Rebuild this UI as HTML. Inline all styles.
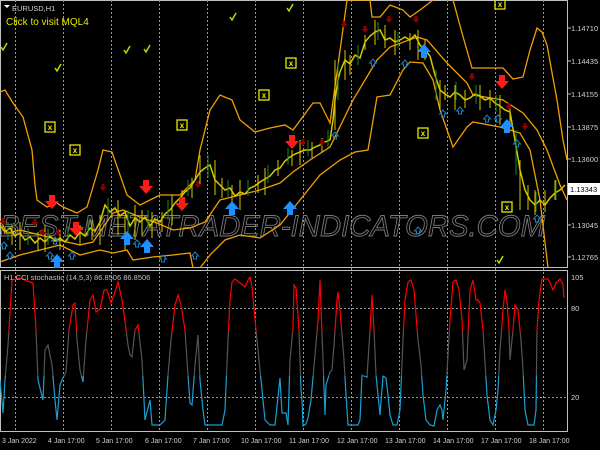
<!DOCTYPE html>
<html><head><meta charset="utf-8"><style>
html,body{margin:0;padding:0;background:#000;width:600px;height:450px;overflow:hidden}
svg{display:block}
text{font-family:"Liberation Sans",sans-serif}
</style></head><body>
<svg width="600" height="450" viewBox="0 0 600 450" xmlns="http://www.w3.org/2000/svg">
<defs>
<clipPath id="cTop"><rect x="0" y="270" width="568" height="62"/></clipPath>
<clipPath id="cMid"><rect x="0" y="332" width="568" height="44"/></clipPath>
<clipPath id="cBot"><rect x="0" y="376" width="568" height="60"/></clipPath>
<clipPath id="cMain"><rect x="0" y="0" width="568" height="268"/></clipPath>
<g id="rdn"><path d="M-3,-8 h6 v6 h4 l-7,8 l-7,-8 h4z" fill="#ff1a1a"/></g>
<g id="bup"><path d="M-3,8 h6 v-6 h4 l-7,-8 l-7,8 h4z" fill="#1e90ff"/></g>
<g id="sup"><path d="M-1.5,4 h3 v-3 h2 l-3.5,-4 l-3.5,4 h2z" fill="none" stroke="#1e7fc0" stroke-width="1"/></g>
<g id="sdn"><path d="M-1.5,-4 h3 v3 h2 l-3.5,4 l-3.5,-4 h2z" fill="#8b0000"/></g>
<g id="xb"><rect x="-5" y="-5" width="10" height="10" fill="none" stroke="#e6e600" stroke-width="1.3"/><text x="0" y="3" font-size="8" fill="#e6e600" text-anchor="middle" font-weight="bold">x</text></g>
<g id="ck"><path d="M-3,0 l2,3 l4,-7" fill="none" stroke="#c8d400" stroke-width="1.5"/></g>
<polyline id="sp" fill="none" stroke-width="1.2" points="0,380 3,413 5,380 8,345 12,280 20,278 25,280 30,282 33,283 36,330 38,380 43,400 45,350 48,345 52,365 55,400 57,420 60,385 62,380 66,372 69,330 73,305 75,303 77,340 80,370 83,382 86,340 88,320 90,300 93,295 96,312 100,309 104,290 107,290 111,303 114,295 118,282 122,300 125,321 128,345 130,355 132,357 135,330 138,325 142,360 145,420 150,400 152,425 160,425 165,420 168,375 171,340 175,305 178,295 181,305 185,330 188,375 190,403 192,405 195,365 198,335 200,380 203,410 205,425 222,425 225,410 228,340 230,300 232,282 235,279 240,283 245,287 248,280 250,277 252,287 256,330 260,370 265,420 270,425 275,425 280,378 282,413 286,413 288,425 290,360 293,328 294,285 296,288 299,330 301,390 302,400 303,426 306,424 308,418 311,400 315,355 318,320 320,280 323,360 325,415 326,385 330,372 332,370 334,345 337,300 338,292 340,310 344,360 346,395 348,425 358,425 360,420 362,375 364,376 367,377 370,330 372,295 374,330 376,375 378,395 380,415 383,376 386,378 388,395 390,415 393,425 397,425 400,410 403,340 405,300 408,282 411,280 414,290 418,340 421,365 423,395 426,420 430,425 434,426 437,410 440,405 442,410 443,420 446,390 450,320 453,282 456,280 459,290 462,320 464,370 467,360 470,290 473,280 476,300 478,300 480,303 483,330 485,362 487,395 490,420 493,425 496,410 498,390 500,350 503,310 505,290 507,302 509,330 510,360 513,330 515,305 518,310 521,340 523,370 525,410 528,425 534,425 536,410 537,330 539,300 542,279 548,279 550,283 553,290 556,283 560,279 563,284 564,298"/>
</defs>
<rect x="0.5" y="0.5" width="567" height="267" fill="none" stroke="#c0c0c0" stroke-width="1"/>
<rect x="0.5" y="270.5" width="567" height="161" fill="none" stroke="#c0c0c0" stroke-width="1"/>
<g stroke="#9a9a9a" stroke-width="1" stroke-dasharray="2,2">
<path d="M15.5,0V432M63.5,0V432M111.5,0V432M159.5,0V432M207.5,0V432M255.5,0V432M303.5,0V432M351.5,0V432M399.5,0V432M447.5,0V432M495.5,0V432M543.5,0V432"/>
<path d="M0,308.5H568M0,397.5H568"/>
</g>
<text x="0" y="236" font-size="30" font-style="italic" fill="none" stroke="#7a7a7a" stroke-width="0.9" textLength="545" lengthAdjust="spacingAndGlyphs">BEST-METATRADER-INDICATORS.COM</text>
<g clip-path="url(#cMain)" fill="none" stroke="#f0a000" stroke-width="1.3">
<polyline points="0,92 5,90 13,103 23,117 32,150 35,185 37,200 47,207 57,203 63,207 77,213 87,207 93,187 98,170 103,150 112,152 120,175 127,195 140,205 160,195 180,195 195,180 200,150 210,110 220,95 232,100 240,120 255,132 270,128 285,125 293,130 313,103 320,103 330,123 347,0 370,0 372,17 380,17 390,5 403,10 410,17 420,10 433,0"/>
<polyline points="453,0 462,33 472,68 477,68 503,68 513,79 523,77 530,50 537,28 542,32 547,45 557,100 563,140 567,160"/>
<polyline points="0,220 7,233 20,230 40,235 67,242 80,245 93,242 113,213 123,210 140,217 157,223 173,230 190,228 205,222 220,200 240,195 260,190 280,183 293,172 310,160 330,147 353,100 377,60 390,47 417,37 427,40 447,63 467,83 473,95 503,100 523,113 537,130 547,150 560,185 567,200"/>
<polyline points="0,262 20,255 40,250 60,245 80,255 100,250 113,253 127,250 133,260 153,257 173,255 190,253 193,268"/>
<polyline points="200,268 210,255 225,240 240,235 260,238 280,225 300,200 320,175 340,160 355,152 368,150 377,97 390,95 403,70 410,62 423,63 433,80 440,110 453,147 467,127 473,122 500,127 520,133 530,150 540,200 548,268"/>
</g>
<g clip-path="url(#cMain)" fill="none">
<polyline stroke="#d6c800" stroke-width="1.5" points="0,225 5,232 10,228 15,236 20,233 25,240 30,237 35,243 40,238 45,242 50,236 55,241 60,238 65,242 70,235 75,239 80,232 85,236 90,228 95,231 100,222 105,205 110,212 115,208 120,216 125,212 130,226 135,218 140,222 145,217 150,226 155,219 160,222 165,214 170,210 175,203 180,198 185,192 190,188 195,180 200,172 205,168 210,165 215,180 220,185 225,190 230,188 235,196 240,192 245,194 250,188 255,186 260,182 265,179 270,176 275,170 280,168 285,161 290,157 295,154 300,152 305,150 310,150 315,147 320,145 325,142 330,140 333,120 335,100 338,80 340,72 345,60 350,64 355,55 360,58 365,42 370,36 375,32 380,30 385,40 390,38 395,42 400,40 405,37 410,40 415,35 420,45 425,50 430,56 435,75 440,90 445,94 450,97 455,92 460,95 465,100 470,98 475,94 480,96 485,100 490,98 495,103 500,106 505,110 510,112 515,140 520,170 525,190 530,200 535,205 540,200 545,205 550,198 555,193 560,190 565,185"/>
<g stroke="#1a8a1a" stroke-width="1">
<path d="M8,222V240M28,228V245M48,228V245M68,226V242M88,220V236M108,198V218M128,210V232M148,210V230M168,200V220M188,180V196M208,155V178M228,180V198M248,180V196M268,165V183M288,148V165M308,140V156M328,130V148M338,62V100M358,45V65M378,22V40M398,32V48M436,70V100M456,82V100M476,85V104M496,95V112M516,130V175M536,192V212M556,180V200"/>
</g>
<g stroke="#d6c800" stroke-width="1">
<path d="M20,222V250M45,225V252M60,230V250M100,215V245M118,200V235M125,215V250M135,205V240M152,212V238M172,195V225M200,155V185M215,160V195M240,180V210M265,168V195M300,140V165M335,60V130M345,50V80M375,20V45M395,30V55M418,30V60M440,80V110M455,85V110M480,85V110M500,95V125M520,160V210M535,190V215M555,180V200M12,225V245M38,232V250M80,225V245M92,220V240M142,210V235M162,212V232M182,190V210M192,178V198M222,178V198M232,185V205M258,175V193M278,160V176M292,150V166M312,142V158M322,138V152M350,55V75M365,35V50M385,25V48M410,33V50M425,40V60M445,85V100M465,90V108M490,90V108M510,105V125M528,185V210M545,190V212"/>
</g>
</g>
<use href="#rdn" x="52" y="203"/><use href="#rdn" x="76" y="230"/><use href="#rdn" x="146" y="188"/><use href="#rdn" x="182" y="205"/><use href="#rdn" x="292" y="143"/><use href="#rdn" x="502" y="83"/>
<use href="#bup" x="57" y="260"/><use href="#bup" x="127" y="237"/><use href="#bup" x="147" y="245"/><use href="#bup" x="232" y="207"/><use href="#bup" x="290" y="207"/><use href="#bup" x="424" y="50"/><use href="#bup" x="507" y="125"/>
<use href="#sup" x="4" y="245"/><use href="#sup" x="10" y="255"/><use href="#sup" x="50" y="255"/><use href="#sup" x="72" y="255"/><use href="#sup" x="163" y="258"/><use href="#sup" x="137" y="243"/><use href="#sup" x="195" y="255"/><use href="#sup" x="335" y="135"/><use href="#sup" x="373" y="62"/><use href="#sup" x="405" y="63"/><use href="#sup" x="443" y="113"/><use href="#sup" x="460" y="110"/><use href="#sup" x="487" y="118"/><use href="#sup" x="498" y="118"/><use href="#sup" x="517" y="143"/><use href="#sup" x="537" y="218"/><use href="#sup" x="418" y="230"/><use href="#sup" x="55" y="240"/>
<use href="#sdn" x="3" y="222"/><use href="#sdn" x="35" y="223"/><use href="#sdn" x="43" y="233"/><use href="#sdn" x="58" y="233"/><use href="#sdn" x="103" y="188"/><use href="#sdn" x="344" y="25"/><use href="#sdn" x="389" y="20"/><use href="#sdn" x="365" y="30"/><use href="#sdn" x="416" y="20"/><use href="#sdn" x="472" y="77"/><use href="#sdn" x="509" y="107"/><use href="#sdn" x="525" y="127"/><use href="#sdn" x="303" y="143"/><use href="#sdn" x="322" y="143"/><use href="#sdn" x="198" y="185"/>
<use href="#xb" x="50" y="127"/><use href="#xb" x="75" y="150"/><use href="#xb" x="182" y="125"/><use href="#xb" x="264" y="95"/><use href="#xb" x="291" y="63"/><use href="#xb" x="423" y="133"/><use href="#xb" x="500" y="4"/><use href="#xb" x="507" y="207"/>
<use href="#ck" x="4" y="47"/><use href="#ck" x="58" y="68"/><use href="#ck" x="127" y="50"/><use href="#ck" x="147" y="49"/><use href="#ck" x="233" y="17"/><use href="#ck" x="290" y="8"/><use href="#ck" x="500" y="260"/>
<path d="M4,5 h6 l-3,3z" fill="#fff"/>
<text x="12" y="11" font-size="7.5" fill="#d0d0d0">EURUSD,H1</text>
<text x="6" y="25" font-size="10" fill="#e6e600">Click to visit MQL4</text>
<g font-size="7.5" fill="#d0d0d0">
<text x="571" y="31">1.14710</text><text x="571" y="64">1.14435</text><text x="571" y="97">1.14155</text><text x="571" y="130">1.13875</text><text x="571" y="162">1.13600</text><text x="571" y="228">1.13045</text><text x="571" y="260">1.12765</text>
<text x="571" y="280">105</text><text x="571" y="311">80</text><text x="571" y="400">20</text>
</g>
<rect x="568" y="183" width="32" height="12" fill="#fff"/>
<text x="570" y="192" font-size="7.5" fill="#000">1.13343</text>
<g stroke="#c0c0c0"><path d="M568,28h3M568,61h3M568,94h3M568,127h3M568,159h3M568,225h3M568,257h3"/></g>
<use href="#sp" stroke="#ff0000" clip-path="url(#cTop)"/>
<use href="#sp" stroke="#555555" clip-path="url(#cMid)"/>
<use href="#sp" stroke="#1aa0d0" clip-path="url(#cBot)"/>
<text x="4" y="280" font-size="7.5" fill="#c0c0c0">H1 CCI stochastic (14,5,3) 86.8506 86.8506</text>
<g font-size="7" fill="#d0d0d0">
<text x="2" y="443">3 Jan 2022</text><text x="48" y="443">4 Jan 17:00</text><text x="96" y="443">5 Jan 17:00</text><text x="145" y="443">6 Jan 17:00</text><text x="193" y="443">7 Jan 17:00</text><text x="241" y="443">10 Jan 17:00</text><text x="289" y="443">11 Jan 17:00</text><text x="337" y="443">12 Jan 17:00</text><text x="385" y="443">13 Jan 17:00</text><text x="433" y="443">14 Jan 17:00</text><text x="481" y="443">17 Jan 17:00</text><text x="529" y="443">18 Jan 17:00</text>
</g>
</svg>
</body></html>
